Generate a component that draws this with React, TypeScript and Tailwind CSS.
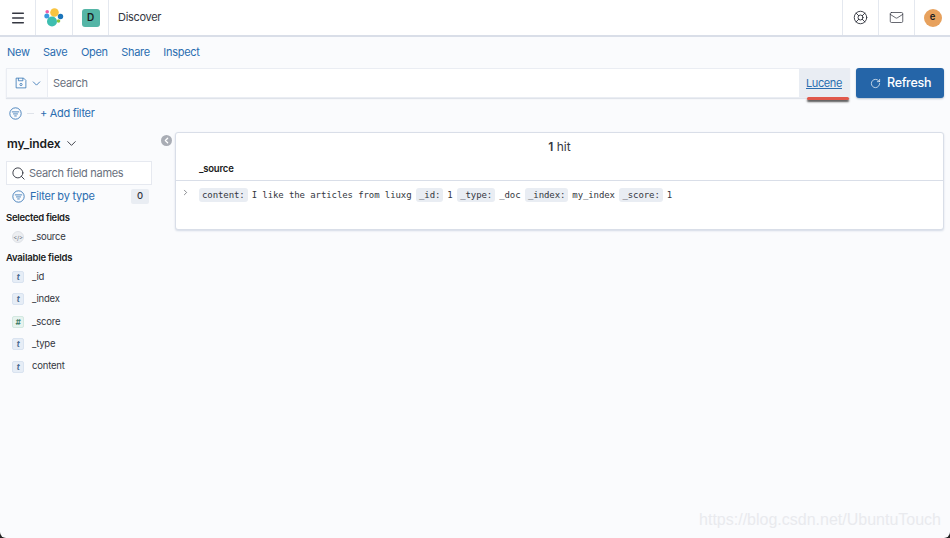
import { ChevronDown, ChevronRight, Mail, Menu, RotateCw, Search, LifeBuoy } from "lucide-react";

const availableFields = [
  { name: "_id", type: "t" },
  { name: "_index", type: "t" },
  { name: "_score", type: "#" },
  { name: "_type", type: "t" },
  { name: "content", type: "t" },
];

const sourceParts = [
  { key: "content:", value: "I like the articles from liuxg" },
  { key: "_id:", value: "1" },
  { key: "_type:", value: "_doc" },
  { key: "_index:", value: "my_index" },
  { key: "_score:", value: "1" },
];

function FilterIcon({ className }: { className: string }) {
  return (
    <svg viewBox="0 0 16 16" fill="none" stroke="currentColor" strokeWidth="1" className={className}>
      <circle cx="8" cy="8" r="7" />
      <path d="M3.5 6h9M5 8.5h6M6.5 11h3" />
    </svg>
  );
}

function SaveIcon() {
  return (
    <svg viewBox="0 0 16 16" fill="none" stroke="currentColor" strokeWidth="1" className="w-[12px] h-[12px] text-[#2a6db0]">
      <path d="M1.5 1.5h10l3 3v10h-13z" />
      <path d="M4.5 1.5v3.5h6v-3.500" />
      <circle cx="8" cy="10" r="1.500" />
    </svg>
  );
}

function Logo() {
  return (
    <svg viewBox="0 0 20 20" className="w-[20px] h-[20px]">
      <circle cx="10.500" cy="4.500" r="4.300" fill="#f9c440" />
      <circle cx="8" cy="13.500" r="5" fill="#3ebeb0" />
      <circle cx="3.200" cy="3.800" r="1.800" fill="#ef5da8" />
      <circle cx="2.800" cy="8" r="2.500" fill="#3b9be0" />
      <circle cx="16.500" cy="8.500" r="2.700" fill="#1c75bb" />
      <circle cx="14.500" cy="13" r="1.800" fill="#8cc63f" />
    </svg>
  );
}

function FieldIcon({ type }: { type: string }) {
  const numeric = type === "#";
  return (
    <span
      className={`w-[12px] h-[12px] rounded-[2px] border flex items-center justify-center text-[8px] italic font-bold ${
        numeric ? "bg-[#e6f3ef] border-[#d3e8e0] text-[#44806b]" : "bg-[#e6edf6] border-[#d9e3f0] text-[#4a6a90]"
      }`}
    >
      {type}
    </span>
  );
}

export default function App() {
  return (
    <div className="w-[950px] h-[538px] bg-[#222] overflow-hidden font-['Inter',sans-serif]">
      <div className="relative w-full h-full flex flex-col bg-[#fafbfd] text-[#343741] rounded-b-[6px] overflow-hidden">
        {/* Top bar */}
        <header className="h-[37px] shrink-0 flex bg-white border-b-2 border-[#d9dee8]">
          <div className="w-[36px] border-r border-[#e4e8ef] flex items-center justify-center pl-[1px] pt-[1px]">
            <Menu className="w-[16px] h-[16px] text-[#343741]" strokeWidth={2.2} />
          </div>
          <div className="w-[37px] border-r border-[#e4e8ef] flex items-center justify-center">
            <Logo />
          </div>
          <div className="w-[36px] border-r border-[#e4e8ef] flex items-center justify-center">
            <span className="w-[18px] h-[18px] rounded-[3px] bg-[#54b5a6] text-[10px] font-semibold text-[#1a1c21] flex items-center justify-center">
              D
            </span>
          </div>
          <div className="flex-1 pl-[9px] pt-[9px] text-[11px] tracking-[-0.3px] leading-[17px]">Discover</div>
          <div className="w-[36px] border-l border-[#e4e8ef] flex items-center justify-center">
            <LifeBuoy className="w-[15px] h-[15px]" strokeWidth={1.500} />
          </div>
          <div className="w-[36px] border-l border-[#e4e8ef] flex items-center justify-center">
            <Mail className="w-[15px] h-[15px]" strokeWidth={1.200} />
          </div>
          <div className="w-[36px] border-l border-[#e4e8ef] flex items-center justify-center">
            <span className="w-[18px] h-[18px] rounded-full bg-[#e7a15d] text-[9.500px] font-semibold text-[#1a1c21] flex items-center justify-center">
              e
            </span>
          </div>
        </header>

        {/* Menu */}
        <nav className="h-[31px] shrink-0 flex items-center gap-[13.500px] pl-[7px] text-[11px] tracking-[-0.3px] text-[#2a6db0]">
          <span>New</span>
          <span>Save</span>
          <span>Open</span>
          <span>Share</span>
          <span>Inspect</span>
        </nav>

        {/* Search row */}
        <div className="h-[30px] shrink-0 flex gap-[6px] pl-[6px] pr-[6px]">
          <div className="relative flex-1 flex bg-white border border-[#eaedf3] shadow-[0_1px_1px_#dfe3ea]">
            <div className="w-[41px] bg-[#fafbfd] border-r border-[#eaedf3] flex items-center pl-[8px] gap-[3px]">
              <SaveIcon />
              <ChevronDown className="w-[13px] h-[13px] text-[#2a6db0]" strokeWidth={1.500} />
            </div>
            <div className="flex-1 flex items-center pl-[5px] pt-[1px] text-[11px] tracking-[-0.3px] text-[#69707d]">Search</div>
            <div className="w-[50px] bg-[#e9edf3] flex items-center justify-center pt-[1px] text-[11px] tracking-[-0.4px] text-[#2a6db0] underline">
              Lucene
            </div>
            <span className="absolute left-[800px] top-[28px] w-[42px] h-[3px] rounded-full bg-[#e0584b] shadow-[0_2px_2px_#555]" />
          </div>
          <button className="w-[88px] rounded-[3px] bg-[#2565a8] text-white text-[12.500px] tracking-[-0.3px] font-medium flex items-center pl-[14px] gap-[6px] shadow-[0_1px_2px_#b8c2d0]">
            <RotateCw className="w-[11px] h-[11px]" strokeWidth={1.500} />
            Refresh
          </button>
        </div>

        {/* Filter row */}
        <div className="h-[30px] shrink-0 flex items-center pl-[9px] text-[11px] tracking-[-0.3px] text-[#2a6db0]">
          <FilterIcon className="w-[13px] h-[13px]" />
          <span className="w-[7px] h-px bg-[#dfe3ea] ml-[5px] mr-[6px]" />
          <span>+ Add filter</span>
        </div>

        {/* Main */}
        <div className="flex-1 flex pt-[4px]">
          <aside className="w-[175px] shrink-0 pl-[6px] flex flex-col relative">
            <div className="flex items-center gap-[4px] pl-[1px] pt-[1px] h-[14px] mt-[4px] text-[12px] tracking-[-0.1px] font-semibold text-[#1a1c21]">
              my_index
              <ChevronDown className="w-[15px] h-[15px] text-[#343741]" strokeWidth={1.500} />
            </div>
            <span className="absolute left-[161px] top-[3px] w-[11px] h-[11px] rounded-full bg-[#a9adb5] flex items-center justify-center">
              <ChevronDown className="w-[9px] h-[9px] rotate-90 text-white" strokeWidth={3.500} />
            </span>
            <div className="w-[146px] h-[24px] mt-[11px] bg-white border border-[#e6e9f0] flex items-center pl-[4px] gap-[3px] text-[11px] tracking-[-0.3px] text-[#69707d]">
              <Search className="w-[15px] h-[15px] text-[#343741]" strokeWidth={1.500} />
              Search field names
            </div>
            <div className="w-[143px] h-[22px] flex items-center justify-between pl-[6px] text-[11px] tracking-[-0.25px] text-[#2a6db0]">
              <span className="flex items-center gap-[5px]">
                <FilterIcon className="w-[13px] h-[13px]" />
                Filter by type
              </span>
              <span className="w-[18px] h-[15px] rounded-[2px] bg-[#e9edf3] text-[9.500px] font-medium text-[#343741] flex items-center justify-center">
                0
              </span>
            </div>
            <h3 className="mt-[3px] h-[15px] text-[9.500px] tracking-[-0.3px] leading-[15px] font-semibold text-[#1a1c21]">Selected fields</h3>
            <div className="h-[24px] flex items-center pl-[6px] gap-[8px] text-[9.500px] tracking-[-0.2px] text-[#343741]">
              <span className="w-[12px] h-[12px] rounded-full bg-[#eceef1] border border-[#dfe2e7] text-[6px] text-[#69707d] flex items-center justify-center">
                {"</>"}
              </span>
              _source
            </div>
            <h3 className="mt-[1px] h-[15px] text-[9.500px] tracking-[-0.2px] leading-[15px] font-semibold text-[#1a1c21]">Available fields</h3>
            <div className="mt-[1px] flex flex-col gap-[0.400px]">
              {availableFields.map((field) => (
                <div key={field.name} className="h-[22px] flex items-center pl-[6px] gap-[8px] text-[9.500px] tracking-[-0.2px] text-[#343741]">
                  <FieldIcon type={field.type} />
                  {field.name}
                </div>
              ))}
            </div>
          </aside>

          {/* Results card */}
          <section className="w-[769px] h-[98px] bg-white border border-[#d9dee8] rounded-[3px] shadow-[0_1px_2px_#d3dae6]">
            <div className="h-[26px] pt-[6px] text-center text-[12px] leading-[16px]">
              <b className="font-semibold">1</b> hit
            </div>
            <div className="h-[22px] pl-[23px] pt-[3px] text-[9.500px] tracking-[-0.2px] leading-[14px] font-semibold text-[#1a1c21] border-b border-[#d9dee8]">
              _source
            </div>
            <div className="flex items-start pl-[5px] pt-[6px] font-['DejaVu_Sans_Mono',monospace] text-[9px] tracking-[-0.09px] leading-[14px]">
              <ChevronRight className="w-[9px] h-[9px] mt-[1px] text-[#343741]" strokeWidth={1.500} />
              <div className="ml-[9px] mt-[1px] flex items-center gap-[4.500px]">
                {sourceParts.map((part) => (
                  <span key={part.key} className="flex items-center gap-[4px]">
                    <span className="px-[3px] rounded-[3px] bg-[#e9edf3]">{part.key}</span>
                    <span>{part.value}</span>
                  </span>
                ))}
              </div>
            </div>
          </section>
        </div>

        <span className="absolute right-[9px] bottom-[8px] text-[16px] leading-[20px] text-[#e9eaee] font-['Liberation_Sans',sans-serif]">
          https://blog.csdn.net/UbuntuTouch
        </span>
      </div>
    </div>
  );
}
